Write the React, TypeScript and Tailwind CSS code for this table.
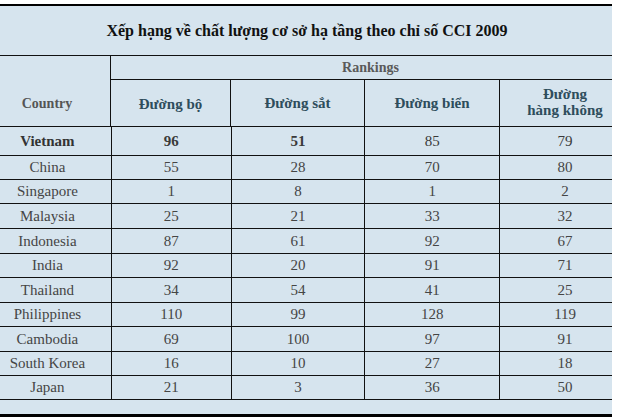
import React from "react";

const rows: [string, string, string, string, string][] = [
  ["China", "55", "28", "70", "80"],
  ["Singapore", "1", "8", "1", "2"],
  ["Malaysia", "25", "21", "33", "32"],
  ["Indonesia", "87", "61", "92", "67"],
  ["India", "92", "20", "91", "71"],
  ["Thailand", "34", "54", "41", "25"],
  ["Philippines", "110", "99", "128", "119"],
  ["Cambodia", "69", "100", "97", "91"],
  ["South Korea", "16", "10", "27", "18"],
  ["Japan", "21", "3", "36", "50"],
];

const heights = ["h-[24px]", "h-[24px]", "h-[25px]", "h-[25px]", "h-[24px]", "h-[25px]", "h-[24px]", "h-[25px]", "h-[24px]", "h-[24px]"];

export default function App() {
  return (
    <div className="w-[617px] h-[419px] bg-white pt-[4px]" style={{ fontFamily: '"Liberation Serif", "Times New Roman", serif' }}>
      <div className="w-[612px] overflow-hidden bg-[#d6e4ee] border-t-2 border-b-[3px] border-black">
        <div className="h-[50px] border-b border-[#111] flex items-center justify-center text-[16px] font-bold text-[#111] pl-[2px]">
          Xếp hạng về chất lượng cơ sở hạ tầng theo chỉ số CCI 2009
        </div>
        <div className="ml-[-16px] w-[646px]">
          <div className="flex border-b border-[#111]">
            <div className="w-[128px] h-[70px] border-r border-[#111] flex items-center justify-center text-[14px] font-bold text-[#555] pt-[24px]">
              Country
            </div>
            <div className="flex-1 flex flex-col">
              <div className="h-[24px] border-b border-[#111] flex items-center justify-center text-[14px] font-bold text-[#5a5a5a]">
                Rankings
              </div>
              <div className="flex h-[46px] text-[15px] font-bold text-[#2e4d5c] leading-[16px]">
                <div className="w-[120px] border-r border-[#111] flex items-center justify-center pt-[1px]">Đường bộ</div>
                <div className="w-[134px] border-r border-[#111] flex items-center justify-center">Đường sắt</div>
                <div className="w-[135px] border-r border-[#111] flex items-center justify-center">Đường biển</div>
                <div className="w-[130px] flex items-center justify-center text-center pb-[3px]">Đường<br />hàng không</div>
              </div>
            </div>
          </div>
          <div className="flex h-[29px] border-b border-[#111] text-[15px] text-[#3a3a3a]">
            <div className="w-[128px] border-r border-[#111] flex items-center justify-center font-bold text-[15px] text-[#333]">Vietnam</div>
            <div className="w-[120px] border-r border-[#111] flex items-center justify-center font-bold">96</div>
            <div className="w-[134px] border-r border-[#111] flex items-center justify-center font-bold">51</div>
            <div className="w-[135px] border-r border-[#111] flex items-center justify-center">85</div>
            <div className="w-[130px] flex items-center justify-center">79</div>
          </div>
          {rows.map((r, i) => (
            <div key={r[0]} className={`flex ${heights[i]} border-b border-[#111] text-[15px] text-[#454545]`}>
              <div className="w-[128px] border-r border-[#111] flex items-center justify-center">{r[0]}</div>
              <div className="w-[120px] border-r border-[#111] flex items-center justify-center">{r[1]}</div>
              <div className="w-[134px] border-r border-[#111] flex items-center justify-center">{r[2]}</div>
              <div className="w-[135px] border-r border-[#111] flex items-center justify-center">{r[3]}</div>
              <div className="w-[130px] flex items-center justify-center">{r[4]}</div>
            </div>
          ))}
          <div className="h-[14px]" />
        </div>
      </div>
    </div>
  );
}
